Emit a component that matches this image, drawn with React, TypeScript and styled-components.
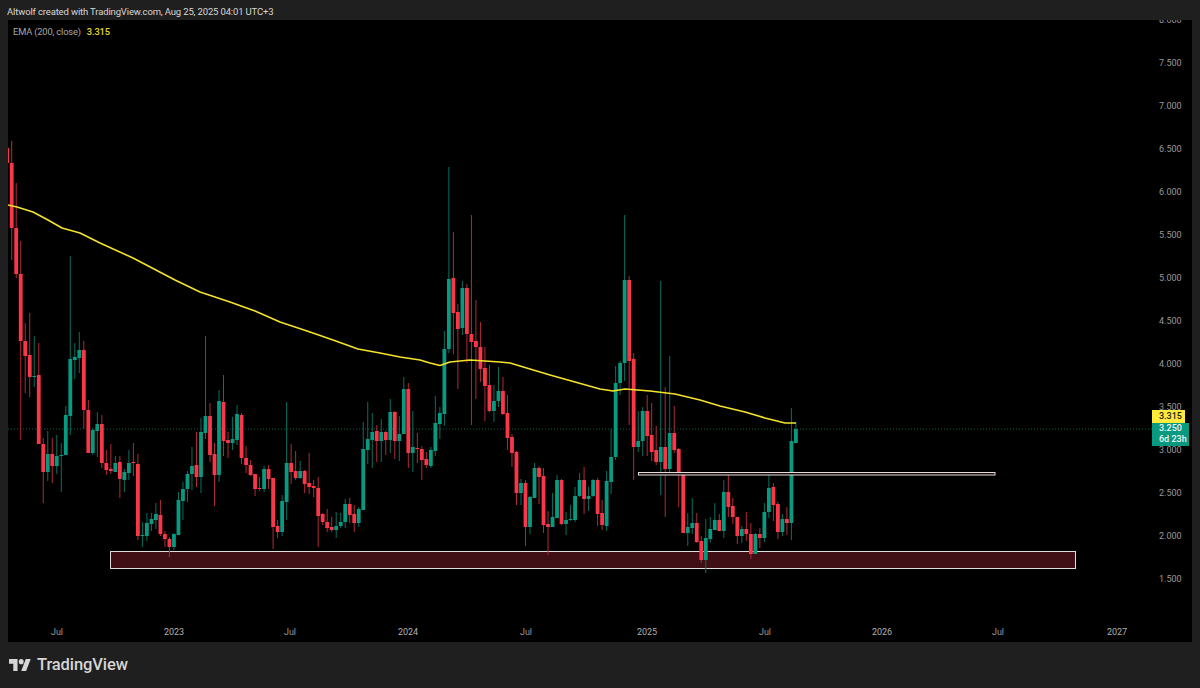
import styled, { createGlobalStyle } from 'styled-components';

type Candle = [number, number, number, number, 'g' | 'r'];

// body top, body bottom, wick top, wick bottom, in page pixels (one candle a week)
const candles: Candle[] = [
  [163, 228, 141, 260, 'r'], [228, 274, 183, 278, 'r'], [274, 341, 241, 440, 'r'], [341, 356, 323, 393, 'r'],
  [355, 377, 313, 397, 'r'], [376, 377, 336, 387, 'g'], [375, 444, 343, 444, 'r'], [444, 472, 438, 503, 'r'],
  [454, 472, 431, 481, 'g'], [454, 466, 438, 483, 'r'], [456, 466, 435, 474, 'g'], [455, 456, 443, 492, 'g'],
  [415, 455, 406, 455, 'g'], [359, 416, 256, 435, 'g'], [357, 360, 343, 379, 'g'], [350, 358, 332, 373, 'g'],
  [350, 410, 341, 429, 'r'], [410, 453, 400, 453, 'r'], [430, 453, 428, 455, 'g'], [424, 431, 412, 457, 'g'],
  [424, 463, 415, 468, 'r'], [463, 470, 450, 475, 'r'], [469, 471, 444, 474, 'r'], [463, 472, 456, 472, 'g'],
  [462, 479, 456, 498, 'r'], [472, 480, 469, 492, 'g'], [463, 473, 450, 480, 'g'], [462, 463, 443, 476, 'r'],
  [464, 536, 454, 540, 'r'], [535, 536, 522, 547, 'g'], [523, 536, 513, 541, 'g'], [519, 524, 513, 531, 'g'],
  [514, 520, 503, 529, 'g'], [515, 534, 500, 536, 'r'], [534, 539, 531, 547, 'r'], [539, 547, 537, 557, 'r'],
  [534, 547, 533, 550, 'g'], [500, 535, 492, 535, 'g'], [489, 501, 482, 520, 'g'], [474, 489, 471, 502, 'g'],
  [466, 474, 447, 490, 'g'], [465, 477, 432, 487, 'r'], [432, 477, 418, 493, 'g'], [416, 433, 336, 439, 'g'],
  [416, 455, 403, 462, 'r'], [454, 475, 443, 506, 'r'], [401, 475, 390, 482, 'g'], [402, 441, 375, 456, 'r'],
  [440, 443, 432, 458, 'r'], [439, 443, 417, 450, 'g'], [414, 440, 405, 445, 'g'], [415, 458, 413, 464, 'r'],
  [458, 465, 446, 473, 'r'], [465, 475, 460, 476, 'r'], [474, 489, 474, 496, 'r'], [488, 489, 477, 491, 'r'],
  [469, 489, 466, 492, 'g'], [469, 479, 465, 489, 'r'], [478, 527, 478, 549, 'r'], [526, 532, 520, 538, 'r'],
  [501, 532, 495, 536, 'g'], [463, 502, 402, 520, 'g'], [463, 472, 444, 484, 'r'], [471, 478, 451, 480, 'r'],
  [471, 478, 461, 479, 'g'], [471, 484, 470, 493, 'r'], [483, 487, 453, 494, 'r'], [486, 488, 480, 497, 'r'],
  [488, 516, 477, 547, 'r'], [514, 522, 513, 525, 'r'], [522, 528, 509, 532, 'r'], [527, 530, 517, 532, 'r'],
  [526, 530, 512, 538, 'g'], [522, 526, 513, 528, 'g'], [504, 522, 499, 528, 'g'], [504, 515, 498, 523, 'r'],
  [514, 523, 505, 532, 'r'], [509, 523, 507, 527, 'g'], [449, 510, 422, 510, 'g'], [439, 450, 402, 464, 'g'],
  [432, 440, 413, 468, 'g'], [431, 441, 425, 462, 'r'], [432, 441, 419, 462, 'g'], [432, 440, 431, 455, 'r'],
  [412, 440, 399, 453, 'g'], [412, 441, 411, 459, 'r'], [434, 441, 416, 461, 'g'], [389, 434, 377, 434, 'g'],
  [389, 453, 383, 468, 'r'], [447, 453, 411, 472, 'g'], [448, 449, 433, 463, 'r'], [449, 460, 446, 480, 'r'],
  [459, 465, 452, 468, 'r'], [450, 466, 447, 468, 'g'], [423, 451, 396, 456, 'g'], [413, 424, 407, 439, 'g'],
  [349, 414, 331, 426, 'g'], [279, 349, 167, 353, 'g'], [278, 313, 232, 354, 'r'], [312, 329, 304, 389, 'r'],
  [288, 328, 281, 335, 'g'], [288, 334, 284, 363, 'r'], [334, 342, 215, 425, 'r'], [341, 347, 300, 399, 'r'],
  [347, 369, 322, 382, 'r'], [368, 386, 347, 421, 'r'], [385, 411, 365, 412, 'r'], [401, 411, 385, 422, 'g'],
  [391, 401, 367, 407, 'g'], [391, 414, 377, 415, 'r'], [413, 438, 395, 450, 'r'], [437, 453, 434, 467, 'r'],
  [452, 493, 451, 505, 'r'], [483, 493, 479, 505, 'g'], [483, 527, 480, 546, 'r'], [497, 527, 496, 534, 'g'],
  [468, 498, 463, 498, 'g'], [468, 477, 466, 504, 'r'], [476, 525, 468, 533, 'r'], [524, 527, 511, 555, 'r'],
  [517, 527, 493, 527, 'g'], [480, 518, 475, 518, 'g'], [480, 524, 479, 525, 'r'], [520, 524, 512, 535, 'g'],
  [519, 520, 505, 521, 'g'], [496, 520, 487, 522, 'g'], [480, 496, 473, 497, 'g'], [480, 499, 467, 514, 'r'],
  [496, 499, 487, 511, 'g'], [480, 496, 479, 497, 'g'], [480, 514, 478, 526, 'r'], [513, 525, 500, 530, 'r'],
  [481, 526, 471, 531, 'g'], [457, 482, 429, 494, 'g'], [383, 457, 366, 460, 'g'], [363, 383, 361, 395, 'g'],
  [280, 363, 215, 381, 'g'], [280, 361, 276, 425, 'r'], [359, 447, 353, 480, 'r'], [441, 447, 411, 452, 'g'],
  [411, 441, 407, 456, 'g'], [411, 436, 395, 456, 'r'], [435, 452, 403, 461, 'r'], [450, 462, 426, 465, 'r'],
  [447, 462, 281, 495, 'g'], [447, 469, 387, 517, 'r'], [433, 469, 356, 475, 'g'], [433, 450, 406, 453, 'r'],
  [449, 474, 448, 507, 'r'], [474, 533, 474, 533, 'r'], [527, 533, 513, 546, 'g'], [523, 528, 498, 534, 'g'],
  [523, 542, 513, 543, 'r'], [541, 560, 536, 563, 'r'], [538, 560, 519, 573, 'g'], [529, 539, 517, 543, 'g'],
  [520, 530, 503, 530, 'g'], [520, 531, 514, 531, 'r'], [492, 531, 480, 538, 'g'], [492, 507, 472, 517, 'r'],
  [506, 517, 498, 524, 'r'], [517, 536, 517, 544, 'r'], [529, 536, 526, 543, 'g'], [529, 534, 512, 541, 'r'],
  [534, 554, 523, 559, 'r'], [534, 554, 533, 554, 'g'], [534, 538, 528, 548, 'r'], [512, 538, 503, 542, 'g'],
  [488, 512, 475, 518, 'g'], [487, 505, 483, 521, 'r'], [504, 532, 502, 539, 'r'], [519, 532, 514, 536, 'g'],
  [519, 523, 507, 535, 'r'], [441, 523, 408, 540, 'g'], [429, 443, 422, 443, 'g'],
];

const emaPoints =
  '8,205 17,207 33,212 48,220 62,228 80,233 100,243 133,258 175,280 200,292 230,302 255,311 280,322 310,332 333,340 358,349 380,353 400,357 420,360 430,363 440,365.5 450,362 470,360 500,362 510,363 530,369 550,375 575,382 600,389 613,391 625,389 650,391 675,394 700,400 720,406 745,412 765,418 785,423 796,423';

const prices = ['8.000', '7.500', '7.000', '6.500', '6.000', '5.500', '5.000', '4.500', '4.000', '3.500', '3.000', '2.500', '2.000', '1.500'];
const times = ['Jul', '2023', 'Jul', '2024', 'Jul', '2025', 'Jul', '2026', 'Jul', '2027'];

const candleX = (i: number) => 11.7 + i * 4.507;

const GlobalStyle = createGlobalStyle`
  html, body {
    margin: 0;
    background: #1f1f1f;
  }
`;

const Page = styled.div`
  width: 1200px;
  height: 688px;
  display: flex;
  flex-direction: column;
  overflow: hidden;
  background: #1f1f1f;
  font-family: Roboto, 'Liberation Sans', sans-serif;
`;

const Header = styled.div`
  height: 20px;
  padding-left: 7px;
  line-height: 23px;
  font-size: 9.5px;
  letter-spacing: -0.15px;
  color: #d6d6d6;
`;

const ChartFrame = styled.div`
  margin: 0 8px;
  height: 622px;
  background: #000;
  display: grid;
  grid-template-columns: 1144px 40px;
  grid-template-rows: 600px 22px;
  overflow: hidden;
`;

const Plot = styled.div`
  position: relative;
`;

const Legend = styled.div`
  position: absolute;
  top: 6px;
  left: 5px;
  display: flex;
  gap: 6px;
  font-size: 9.3px;
  letter-spacing: -0.15px;
  line-height: 12px;
  color: #a8a8a8;
`;

const LegendValue = styled.span`
  color: #e8d820;
  font-weight: 500;
`;

const ChartSvg = styled.svg`
  display: block;
`;

const Wick = styled.line<{ $up: boolean }>`
  stroke: ${(p) => (p.$up ? '#06705f' : '#b02a38')};
  stroke-width: 1;
`;

const Body = styled.rect<{ $up: boolean }>`
  fill: ${(p) => (p.$up ? '#089981' : '#f93748')};
`;

const LastPriceLine = styled.line`
  stroke: #07604f;
  stroke-width: 1;
  stroke-dasharray: 1 2;
`;

const EmaLine = styled.polyline`
  fill: none;
  stroke: #f5e32a;
  stroke-width: 1.6;
  stroke-linejoin: round;
`;

const Zone = styled.rect<{ $fill: string }>`
  fill: ${(p) => p.$fill};
  stroke: #e2dcdc;
  stroke-width: 1;
`;

const PriceAxis = styled.div`
  position: relative;
  margin-top: -21px;
`;

const PriceLabel = styled.div`
  height: 43px;
  line-height: 43px;
  padding-left: 7px;
  font-size: 9px;
  color: #9a9a9a;
`;

const PriceTag = styled.div<{ $kind: 'ema' | 'last' }>`
  position: absolute;
  left: 0;
  top: ${(p) => (p.$kind === 'ema' ? '411px' : '424px')};
  width: ${(p) => (p.$kind === 'ema' ? '33px' : '37px')};
  padding: ${(p) => (p.$kind === 'ema' ? '1px 0' : '0 0 1px')};
  padding-left: 7px;
  box-sizing: border-box;
  font-size: 9px;
  line-height: 11px;
  font-weight: 500;
  background: ${(p) => (p.$kind === 'ema' ? '#ffeb3b' : '#089981')};
  color: ${(p) => (p.$kind === 'ema' ? '#1c1c1c' : '#f2f2f2')};
`;

const TimeAxis = styled.div`
  display: grid;
  grid-template-columns: 118px 116px 116px 120px 116px 126px 110px 124px 108px 130px;
  margin-left: -10px;
  line-height: 24px;
`;

const TimeLabel = styled.span<{ $year: boolean }>`
  text-align: center;
  font-size: 9px;
  color: ${(p) => (p.$year ? '#b0b0b0' : '#9a9a9a')};
`;

const Footer = styled.div`
  flex: 1;
  display: flex;
  align-items: center;
  gap: 6px;
  padding: 0 0 1px 9px;
  color: #d6d6d6;
`;

const Brand = styled.span`
  font-size: 16.5px;
  font-weight: 500;
  letter-spacing: -0.1px;
`;

const AxisCorner = styled.div``;

const TvLogo = () => (
  <svg width="22" height="12" viewBox="0 4 36 18" preserveAspectRatio="none" fill="currentColor">
    <path d="M14 22H7V11H0V4h14v18zM28 22h-8l7.5-18h8L28 22z" />
    <circle cx="20" cy="8" r="4" />
  </svg>
);

export default function App() {
  return (
    <Page>
      <GlobalStyle />
      <Header>Altwolf created with TradingView.com, Aug 25, 2025 04:01 UTC+3</Header>
      <ChartFrame>
        <Plot>
          <Legend>
            <span>EMA (200, close)</span>
            <LegendValue>3.315</LegendValue>
          </Legend>
          <ChartSvg width="1144" height="600" viewBox="8 20 1144 600">
            <Zone $fill="#3f0f15" x="110.5" y="551.5" width="965" height="17" />
            <LastPriceLine x1="8" y1="429" x2="1152" y2="429" />
            <Body $up={false} x="8" y="148" width="1" height="15" />
            {candles.map(([top, bottom, high, low, dir], i) => (
              <g key={i}>
                <Wick $up={dir === 'g'} x1={candleX(i)} x2={candleX(i)} y1={high} y2={low} />
                <Body $up={dir === 'g'} x={candleX(i) - 1.9} y={top} width="3.8" height={Math.max(bottom - top, 1)} />
              </g>
            ))}
            <EmaLine points={emaPoints} />
            <Zone $fill="#1c0c0e" x="638.5" y="472.5" width="356.5" height="2.5" />
          </ChartSvg>
        </Plot>
        <PriceAxis>
          {prices.map((p) => (
            <PriceLabel key={p}>{p}</PriceLabel>
          ))}
          <PriceTag $kind="ema">3.315</PriceTag>
          <PriceTag $kind="last">
            3.250
            <br />
            6d 23h
          </PriceTag>
        </PriceAxis>
        <TimeAxis>
          {times.map((t, i) => (
            <TimeLabel key={i} $year={t !== 'Jul'}>
              {t}
            </TimeLabel>
          ))}
        </TimeAxis>
        <AxisCorner />
      </ChartFrame>
      <Footer>
        <TvLogo />
        <Brand>TradingView</Brand>
      </Footer>
    </Page>
  );
}
